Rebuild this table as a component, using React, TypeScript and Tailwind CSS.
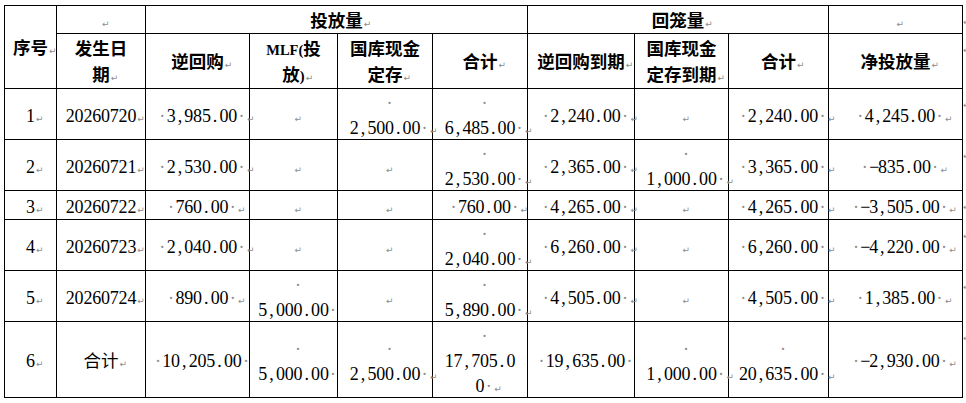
import React from "react";

const MARK = "text-[#8c8c8c]";

function Chars({ s, bold }: { s: string; bold?: boolean }) {
  const parts: React.ReactNode[] = [];
  Array.from(s).forEach((c, i) => {
    if (c === "·") {
      parts.push(
        <span key={i} className="inline-block w-[8.8px] text-center text-[#8c8c8c] font-['Liberation_Serif',serif] text-[18px] font-normal">
          ·
        </span>
      );
    } else if (c === "↵") {
      parts.push(
        <span key={i} className="inline-block ml-[1px] text-[9px] leading-none text-[#8c8c8c] font-['DejaVu_Sans',sans-serif] font-normal">
          ↵
        </span>
      );
    } else if (/[ -~−]/.test(c)) {
      parts.push(
        bold ? (
          <span key={i} className="font-['Liberation_Serif',serif] text-[14.5px] font-bold">
            {c}
          </span>
        ) : (
          <span key={i} className="inline-block w-[8.8px] text-center font-['Liberation_Serif',serif] text-[18px] font-normal">
            {c}
          </span>
        )
      );
    } else {
      parts.push(<span key={i}>{c}</span>);
    }
  });
  return <>{parts}</>;
}

function Line({ s, bold, header }: { s: string; bold?: boolean; header?: boolean }) {
  const m = s.match(/^(.*?)([·↵]*)$/) as RegExpMatchArray;
  return (
    <div className={header ? "h-[26px] whitespace-nowrap" : "h-[25px] whitespace-nowrap"}>
      <Chars s={m[1]} bold={bold} />
      {m[2] ? (
        <span className="inline-block w-0 whitespace-nowrap text-left">
          <Chars s={m[2]} />
        </span>
      ) : null}
    </div>
  );
}

type Content = string | string[];

function Cell({
  c,
  bold,
  rowSpan,
  colSpan,
  header,
}: {
  c: Content;
  bold?: boolean;
  rowSpan?: number;
  colSpan?: number;
  header?: boolean;
}) {
  const lines = Array.isArray(c) ? c : [c];
  return (
    <td
      rowSpan={rowSpan}
      colSpan={colSpan}
      className={
        header
          ? "border border-black p-0 text-center align-middle leading-[26px] font-bold"
          : "border border-black p-0 text-center align-middle leading-[25px]"
      }
    >
      {lines.map((l, i) => (
        <Line key={i} s={l} bold={bold} header={header} />
      ))}
    </td>
  );
}

function EndMark() {
  return (
    <td className="p-0 align-top text-left pt-[3px] leading-none">
      <span className={"text-[9px] font-['DejaVu_Sans',sans-serif] " + MARK}>↵</span>
    </td>
  );
}

const rows: Content[][] = [
  ["1↵", "20260720↵", "·3,985.00·↵", "↵", ["·", "2,500.00·↵"], ["·", "6,485.00·↵"], "·2,240.00·↵", "↵", "·2,240.00·↵", "·4,245.00·↵"],
  ["2↵", "20260721↵", "·2,530.00·↵", "↵", "↵", ["·", "2,530.00·↵"], "·2,365.00·↵", ["·", "1,000.00·↵"], "·3,365.00·↵", "·−835.00·↵"],
  ["3↵", "20260722↵", "·760.00·↵", "↵", "↵", "·760.00·↵", "·4,265.00·↵", "↵", "·4,265.00·↵", "·−3,505.00·↵"],
  ["4↵", "20260723↵", "·2,040.00·↵", "↵", "↵", ["·", "2,040.00·↵"], "·6,260.00·↵", "↵", "·6,260.00·↵", "·−4,220.00·↵"],
  ["5↵", "20260724↵", "·890.00·↵", ["·", "5,000.00·"], "↵", ["·", "5,890.00·↵"], "·4,505.00·↵", "↵", "·4,505.00·↵", "·1,385.00·↵"],
  ["6↵", "合计↵", "·10,205.00·", ["·", "5,000.00·"], ["·", "2,500.00·↵"], ["·", "17,705.0", "0·↵"], "·19,635.00·", ["·", "1,000.00·↵"], ["·", "20,635.00·↵"], "·−2,930.00·↵"],
];

const rowHeights = ["h-[51px]", "h-[51px]", "h-[29px]", "h-[50px]", "h-[51px]", "h-[76px]"];

export default function App() {
  return (
    <div className="w-[966px] h-[403px] overflow-hidden bg-white pl-[4px] pt-[5px] text-black font-['Noto_Sans_CJK_SC',sans-serif] text-[17.5px]">
      <table className="border-collapse table-fixed w-[979px]">
        <colgroup>
          <col className="w-[52px]" />
          <col className="w-[89px]" />
          <col className="w-[104px]" />
          <col className="w-[88px]" />
          <col className="w-[95px]" />
          <col className="w-[95px]" />
          <col className="w-[107px]" />
          <col className="w-[94px]" />
          <col className="w-[100px]" />
          <col className="w-[134px]" />
          <col className="w-[21px]" />
        </colgroup>
        <tbody>
          <tr className="h-[28px]">
            <Cell c="序号↵" header rowSpan={2} />
            <Cell c="↵" header />
            <Cell c="投放量↵" header colSpan={4} />
            <Cell c="回笼量↵" header colSpan={3} />
            <Cell c="↵" header />
            <EndMark />
          </tr>
          <tr className="h-[55px]">
            <Cell c={["发生日", "期↵"]} header bold />
            <Cell c="逆回购↵" header />
            <Cell c={["MLF(投", "放)↵"]} header bold />
            <Cell c={["国库现金", "定存↵"]} header />
            <Cell c="合计↵" header />
            <Cell c="逆回购到期↵" header />
            <Cell c={["国库现金", "定存到期↵"]} header />
            <Cell c="合计↵" header />
            <Cell c="净投放量↵" header />
            <EndMark />
          </tr>
          {rows.map((r, ri) => (
            <tr key={ri} className={rowHeights[ri]}>
              {r.map((c, ci) => (
                <Cell key={ci} c={c} />
              ))}
              <EndMark />
            </tr>
          ))}
        </tbody>
      </table>
    </div>
  );
}
